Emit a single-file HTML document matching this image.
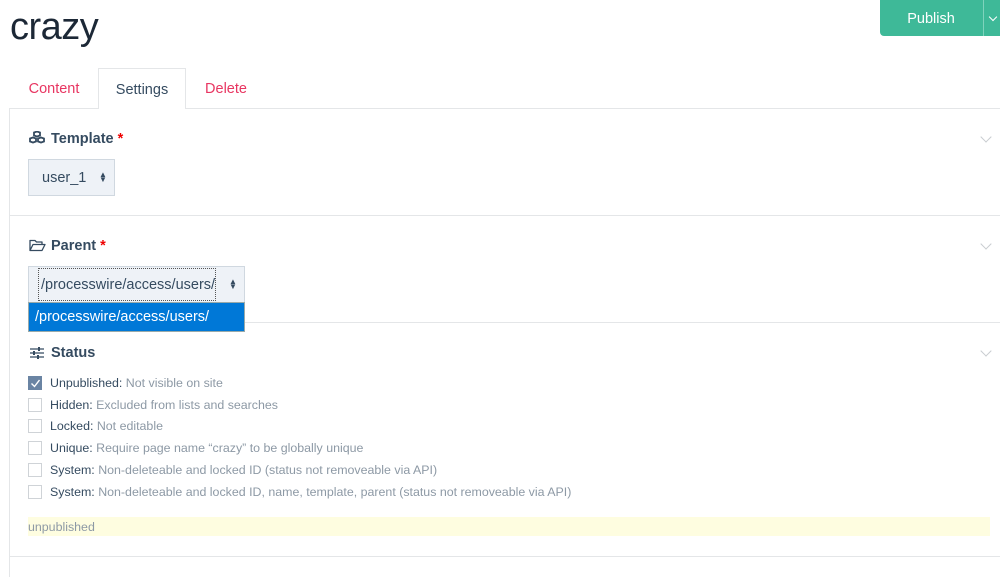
<!DOCTYPE html>
<html><head><meta charset="utf-8"><style>
*{margin:0;padding:0;box-sizing:border-box}
body{width:1000px;height:577px;overflow:hidden;background:#fff;font-family:"Liberation Sans",sans-serif;color:#354b60;position:relative}
.a{position:absolute}
h1{position:absolute;left:10px;top:6px;font-size:38px;font-weight:normal;color:#1c2836;letter-spacing:-0.5px}
.tab{position:absolute;top:68px;height:41px;font-size:14.5px;line-height:43px;text-align:center}
.red{color:#e83561}
.line{position:absolute;left:9px;right:0;height:1px;background:#e4e6e8}
.vl{position:absolute;left:9px;top:108px;width:1px;height:469px;background:#e4e6e8}
.lbl{position:absolute;left:28px;font-size:14.5px;font-weight:bold;color:#354b60}
.lbl b{color:#e00;font-weight:bold}
.chev{position:absolute;right:10px;width:8px;height:8px;border-right:1.3px solid #c8ccd0;border-bottom:1.3px solid #c8ccd0;transform:rotate(45deg)}
.sel{position:absolute;background:#eef2f7;border:1px solid #d0d8e0;font-size:14.5px;color:#354b60}
.arr{position:absolute;font-size:8px;line-height:5px;color:#354b60}
.cb{position:absolute;left:28px;width:14px;height:14px;border:1px solid #cfd3d7;background:#fff}
.row{position:absolute;left:50px;font-size:12.4px;color:#354b60}
.row span{color:#8d99a5}
</style></head><body>
<h1>crazy</h1>
<div class="a" style="left:880px;top:0;width:120px;height:36px;background:#3eb998;border-radius:0 0 0 4px"></div>
<div class="a" style="left:880px;top:11px;width:102px;text-align:center;color:#fff;font-size:14.5px">Publish</div>
<div class="a" style="left:983px;top:0;width:1px;height:36px;background:#7fd3bc"></div>
<div class="a" style="left:990px;top:14px;width:6px;height:6px;border-right:1.5px solid #fff;border-bottom:1.5px solid #fff;transform:rotate(45deg)"></div>

<div class="tab red" style="left:20px;width:68px">Content</div>
<div class="tab" style="left:98px;width:88px;border:1px solid #e4e6e8;border-bottom:none;background:#fff;color:#354b60;z-index:2">Settings</div>
<div class="tab red" style="left:196px;width:60px">Delete</div>
<div class="line" style="top:108px"></div>
<div class="vl"></div>

<!-- Template -->
<svg class="a" style="left:28px;top:131px" width="18" height="15" viewBox="0 0 18 15"><g fill="none" stroke="#354b60" stroke-width="1.8"><path d="M6 1.5l3-1 3 1v3l-3 1-3-1z"/><path d="M2 7.5l3-1 3 1v3l-3 1-3-1z"/><path d="M10 7.5l3-1 3 1v3l-3 1-3-1z"/></g></svg>
<div class="lbl" style="left:51px;top:131px">Template <b>*</b></div>
<div class="chev" style="top:133px"></div>
<div class="sel" style="left:28px;top:159px;width:87px;height:37px"><span class="a" style="left:13px;top:10px">user_1</span><span class="arr" style="left:70px;top:12px">▲<br>▼</span></div>
<div class="line" style="top:215px"></div>

<!-- Parent -->
<svg class="a" style="left:29px;top:239px" width="17" height="13" viewBox="0 0 17 13"><path d="M1 11.5V1.5h5l1.5 1.5H13v2.5M1 11.5l3-6h12l-3 6z" fill="none" stroke="#354b60" stroke-width="1.3" stroke-linejoin="round"/></svg>
<div class="lbl" style="left:51px;top:238px">Parent <b>*</b></div>
<div class="chev" style="top:240px"></div>
<div class="sel" style="left:28px;top:266px;width:217px;height:37px"><div class="a" style="left:9px;top:1px;width:178px;height:33px;border:1px dotted #555"></div><span class="a" style="left:12px;top:10px">/processwire/access/users/</span><span class="arr" style="left:200px;top:12px">▲<br>▼</span></div>
<div class="a" style="left:28px;top:302px;width:217px;height:30px;background:#0078d7;border:1px solid #9aa;color:#fff;font-size:14.5px;line-height:28px;padding-left:6px">/processwire/access/users/</div>
<div class="line" style="top:322px;left:245px"></div>

<!-- Status -->
<svg class="a" style="left:30px;top:347px" width="14" height="12" viewBox="0 0 14 12"><g stroke="#354b60" stroke-width="1.3"><path d="M0 2h14M0 6h14M0 10h14"/></g><g fill="#354b60"><rect x="8" y="0" width="2" height="4"/><rect x="3" y="4" width="2" height="4"/><rect x="7" y="8" width="2" height="4"/></g></svg>
<div class="lbl" style="left:51px;top:345px">Status</div>
<div class="chev" style="top:347px"></div>

<div class="cb" style="top:376px;background:#6a84a3;border-color:#6a84a3"><svg class="a" style="left:1px;top:1px" width="11" height="11" viewBox="0 0 11 11"><path d="M1.5 5.5l3 3 5-6.5" fill="none" stroke="#fff" stroke-width="1.4"/></svg></div>
<div class="row" style="top:376px">Unpublished: <span>Not visible on site</span></div>
<div class="cb" style="top:398px"></div>
<div class="row" style="top:398px">Hidden: <span>Excluded from lists and searches</span></div>
<div class="cb" style="top:419px"></div>
<div class="row" style="top:419px">Locked: <span>Not editable</span></div>
<div class="cb" style="top:441px"></div>
<div class="row" style="top:441px">Unique: <span>Require page name “crazy” to be globally unique</span></div>
<div class="cb" style="top:463px"></div>
<div class="row" style="top:463px">System: <span>Non-deleteable and locked ID (status not removeable via API)</span></div>
<div class="cb" style="top:485px"></div>
<div class="row" style="top:485px">System: <span>Non-deleteable and locked ID, name, template, parent (status not removeable via API)</span></div>

<div class="a" style="left:28px;top:517px;width:962px;height:19px;background:#fefde0;color:#8d99a5;font-size:12.4px;line-height:20px">unpublished</div>
<div class="line" style="top:556px"></div>
</body></html>
